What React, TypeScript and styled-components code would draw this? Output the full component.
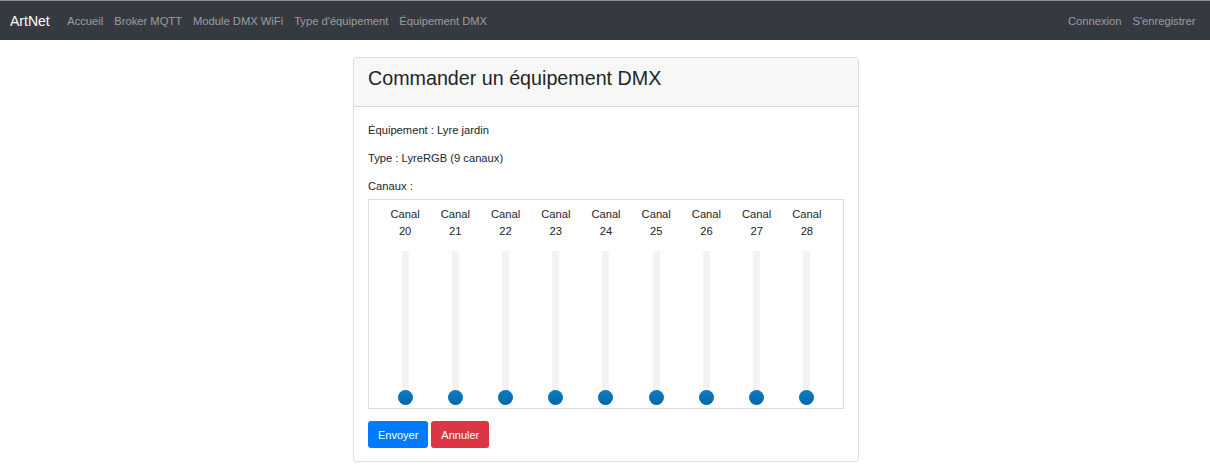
import React from 'react';
import styled, { createGlobalStyle } from 'styled-components';

const GlobalStyle = createGlobalStyle`
  body {
    margin: 0;
    background: #ffffff;
    font-family: 'Liberation Sans', Arial, sans-serif;
    color: #212529;
  }
`;

const NavBar = styled.nav`
  display: flex;
  align-items: center;
  height: 39px;
  border-top: 1px solid #8d8f92;
  background: #343a40;
  padding: 0 9px 0 10px;
  font-size: 11.2px;
`;

const Brand = styled.a`
  color: #ffffff;
  font-size: 14px;
  margin-right: 12px;
`;

const NavList = styled.ul`
  display: flex;
  list-style: none;
  margin: 0;
  padding: 0;
  &.right {
    margin-left: auto;
  }
  > li {
    padding: 0 5.5px;
    color: rgba(255, 255, 255, 0.5);
  }
`;

const Card = styled.section`
  width: 504px;
  margin: 17px 0 0 calc(50% - 252px);
  border: 1px solid rgba(0, 0, 0, 0.125);
  border-radius: 3px;
`;

const CardHeader = styled.header`
  background: #f7f7f7;
  border-bottom: 1px solid rgba(0, 0, 0, 0.125);
  padding: 0 14px;
  height: 48px;
  display: flex;
  align-items: center;
  > h1 {
    margin: 0 0 7px;
    font-size: 19.7px;
    font-weight: normal;
  }
`;

const CardBody = styled.div`
  padding: 15px 14px 13px;
  font-size: 11.2px;
  > p {
    margin: 0 0 12px;
    line-height: 16px;
    &.last {
      margin-bottom: 5px;
    }
  }
`;

const ChannelBox = styled.div`
  display: grid;
  grid-template-columns: repeat(9, 1fr);
  border: 1px solid #dcdcdc;
  padding: 6px 11px 4px;
`;

const Channel = styled.div`
  display: flex;
  flex-direction: column;
  align-items: center;
  > span {
    text-align: center;
    line-height: 17px;
  }
`;

const Track = styled.div`
  position: relative;
  width: 7px;
  height: 146px;
  margin: 11px 0 7px;
  background: #f3f3f3;
`;

const Thumb = styled.div`
  position: absolute;
  left: 50%;
  bottom: -7.5px;
  width: 15px;
  height: 15px;
  margin-left: -7.5px;
  border-radius: 50%;
  background: linear-gradient(#0b7cc3, #0266a6);
`;

const Actions = styled.div`
  display: flex;
  gap: 3px;
  margin-top: 12px;
`;

const Button = styled.button<{ $variant: 'primary' | 'danger' }>`
  height: 27px;
  padding: 0 10px;
  border: none;
  border-radius: 3px;
  font-family: inherit;
  font-size: 11px;
  color: #ffffff;
  background: ${(p) => (p.$variant === 'primary' ? '#007bff' : '#dc3545')};
`;

const channels = [20, 21, 22, 23, 24, 25, 26, 27, 28];

export default function App() {
  return (
    <>
      <GlobalStyle />
      <NavBar>
        <Brand>ArtNet</Brand>
        <NavList>
          <li>Accueil</li>
          <li>Broker MQTT</li>
          <li>Module DMX WiFi</li>
          <li>Type d'équipement</li>
          <li>Équipement DMX</li>
        </NavList>
        <NavList className="right">
          <li>Connexion</li>
          <li>S'enregistrer</li>
        </NavList>
      </NavBar>
      <Card>
        <CardHeader>
          <h1>Commander un équipement DMX</h1>
        </CardHeader>
        <CardBody>
          <p>Équipement : Lyre jardin</p>
          <p>Type : LyreRGB (9 canaux)</p>
          <p className="last">Canaux :</p>
          <ChannelBox>
            {channels.map((c) => (
              <Channel key={c}>
                <span>
                  Canal
                  <br />
                  {c}
                </span>
                <Track>
                  <Thumb />
                </Track>
              </Channel>
            ))}
          </ChannelBox>
          <Actions>
            <Button $variant="primary">Envoyer</Button>
            <Button $variant="danger">Annuler</Button>
          </Actions>
        </CardBody>
      </Card>
    </>
  );
}
